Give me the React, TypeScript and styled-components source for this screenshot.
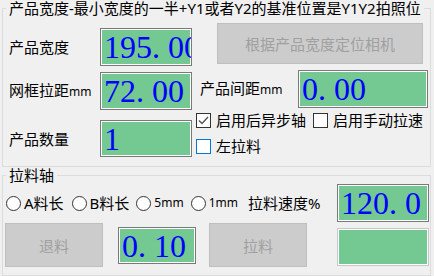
import React from "react";
import styled, { createGlobalStyle } from "styled-components";

const GlobalStyle = createGlobalStyle`
  html, body {
    margin: 0;
    padding: 0;
    background: #f0f0f0;
  }
  body {
    font-family: "Noto Sans", "Noto Sans CJK SC", sans-serif;
    color: #000;
  }
`;

const Form = styled.div`
  width: 434px;
  height: 276px;
  padding-left: 2px;
  box-sizing: border-box;
  overflow: hidden;
`;

const Group = styled.fieldset<{ $h: number }>`
  margin: 0;
  padding: 0;
  min-width: 0;
  width: 429px;
  height: ${(p) => p.$h}px;
  box-sizing: border-box;
  border: 1px solid #dcdcdc;
`;

const GroupTitle = styled.legend`
  margin-left: 3px;
  padding: 0 3px;
  font-size: 15px;
  line-height: 16px;
  height: 16px;
  white-space: nowrap;
`;

const TopBody = styled.div`
  display: grid;
  grid-template-columns: 194px 1fr;
`;

const LeftCol = styled.div`
  display: flex;
  flex-direction: column;
  padding: 12px 0 0 6px;
`;

const FieldRow = styled.div<{ $mt?: number }>`
  display: flex;
  align-items: center;
  margin-top: ${(p) => p.$mt ?? 0}px;
`;

const Label = styled.span<{ $w: number; $pl?: number }>`
  width: ${(p) => p.$w}px;
  padding-left: ${(p) => p.$pl ?? 0}px;
  box-sizing: border-box;
  font-size: 15px;
  line-height: 18px;
  white-space: nowrap;
`;

const Small = styled.span`
  font-size: 12px;
`;

const NumBox = styled.div<{ $w: number; $h?: number; $off?: boolean }>`
  width: ${(p) => p.$w}px;
  height: ${(p) => p.$h ?? 38}px;
  box-sizing: border-box;
  flex-shrink: 0;
  padding: 0 0 0 3px;
  background: #73c991;
  border: 1px solid ${(p) => (p.$off ? "#c8c8c8" : "#7a7a7a")};
  box-shadow: inset 0 0 0 1px #fff;
  color: #0000ff;
  font-family: "Liberation Serif", "Times New Roman", serif;
  font-size: 32px;
  line-height: ${(p) => (p.$h ?? 38) - 1}px;
  white-space: nowrap;
  overflow: hidden;
`;

const Cell = styled.span`
  display: inline-block;
  width: 0.5em;
  text-align: left;
`;

const Num = ({ value }: { value: string }) => (
  <>
    {value.split("").map((c, i) => (
      <Cell key={i}>{c}</Cell>
    ))}
  </>
);

const RightCol = styled.div`
  display: flex;
  flex-direction: column;
  padding-top: 7px;
`;

const GrayButton = styled.div<{ $w: number; $h: number; $ml?: number }>`
  width: ${(p) => p.$w}px;
  height: ${(p) => p.$h}px;
  margin-left: ${(p) => p.$ml ?? 0}px;
  flex-shrink: 0;
  box-sizing: border-box;
  display: flex;
  align-items: center;
  justify-content: center;
  background: #cccccc;
  border: 1px solid #bfbfbf;
  color: #a0a0a0;
  font-size: 15px;
  white-space: nowrap;
`;

const CheckRow = styled.div<{ $mt: number }>`
  display: flex;
  align-items: center;
  gap: 7px;
  margin-top: ${(p) => p.$mt}px;
  margin-left: -1px;
`;

const CheckItem = styled.label`
  display: flex;
  align-items: center;
  gap: 5px;
  font-size: 15px;
  line-height: 16px;
  white-space: nowrap;
`;

const CheckBox = styled.span<{ $focus?: boolean }>`
  width: 15px;
  height: 15px;
  box-sizing: border-box;
  border: 1px solid ${(p) => (p.$focus ? "#0078d7" : "#333")};
  background: #fff;
  display: flex;
  align-items: center;
  justify-content: center;
`;

const Check = ({ checked, focus, children }: { checked?: boolean; focus?: boolean; children: React.ReactNode }) => (
  <CheckItem>
    <CheckBox $focus={focus}>
      {checked && (
        <svg width="13" height="13" viewBox="0 0 13 13">
          <path d="M2 6.5 L5 9.5 L11 3" fill="none" stroke="#555" strokeWidth="1.4" />
        </svg>
      )}
    </CheckBox>
    {children}
  </CheckItem>
);

const BottomBody = styled.div`
  display: flex;
  flex-direction: column;
`;

const AxisRow = styled.div<{ $mt: number; $pl: number; $h: number }>`
  display: flex;
  align-items: center;
  height: ${(p) => p.$h}px;
  margin-top: ${(p) => p.$mt}px;
  padding-left: ${(p) => p.$pl}px;
  padding-right: 1px;
`;

const RadioItem = styled.label<{ $ml?: number }>`
  display: flex;
  align-items: center;
  gap: 3px;
  margin-left: ${(p) => p.$ml ?? 0}px;
  font-size: 15px;
  line-height: 16px;
  white-space: nowrap;
`;

const RadioCircle = styled.span`
  width: 15px;
  height: 15px;
  box-sizing: border-box;
  border: 1px solid #333;
  border-radius: 50%;
  background: #fff;
`;

const Spacer = styled.div`
  flex: 1;
`;

const Push = styled.div<{ $ml?: number; $mt?: number }>`
  margin-left: ${(p) => p.$ml ?? 0}px;
  margin-top: ${(p) => p.$mt ?? 0}px;
  display: flex;
`;

export default function App() {
  return (
    <>
      <GlobalStyle />
      <Form>
        <Group $h={167}>
          <GroupTitle>产品宽度-最小宽度的一半+Y1或者Y2的基准位置是Y1Y2拍照位</GroupTitle>
          <TopBody>
            <LeftCol>
              <FieldRow>
                <Label $w={91}>产品宽度</Label>
                <NumBox $w={92}>
                  <Num value="195.00" />
                </NumBox>
              </FieldRow>
              <FieldRow $mt={6}>
                <Label $w={91}>
                  网框拉距<Small>mm</Small>
                </Label>
                <NumBox $w={92}>
                  <Num value="72.00" />
                </NumBox>
              </FieldRow>
              <FieldRow $mt={10}>
                <Label $w={91}>产品数量</Label>
                <NumBox $w={92} $h={37}>
                  <Num value="1" />
                </NumBox>
              </FieldRow>
            </LeftCol>
            <RightCol>
              <GrayButton $w={206} $h={41} $ml={20}>
                根据产品宽度定位相机
              </GrayButton>
              <FieldRow $mt={6}>
                <Label $w={101} $pl={3}>
                  产品间距<Small>mm</Small>
                </Label>
                <NumBox $w={130}>
                  <Num value="0.00" />
                </NumBox>
              </FieldRow>
              <CheckRow $mt={4}>
                <Check checked>启用后异步轴</Check>
                <Check>启用手动拉速</Check>
              </CheckRow>
              <CheckRow $mt={10}>
                <Check focus>左拉料</Check>
              </CheckRow>
            </RightCol>
          </TopBody>
        </Group>
        <Group $h={109}>
          <GroupTitle>拉料轴</GroupTitle>
          <BottomBody>
            <AxisRow $mt={1} $pl={3} $h={38}>
              <RadioItem>
                <RadioCircle />
                A料长
              </RadioItem>
              <RadioItem $ml={8}>
                <RadioCircle />
                B料长
              </RadioItem>
              <RadioItem $ml={7}>
                <RadioCircle />
                <Small>5mm</Small>
              </RadioItem>
              <RadioItem $ml={7}>
                <RadioCircle />
                <Small>1mm</Small>
              </RadioItem>
              <RadioItem $ml={10}>拉料速度%</RadioItem>
              <Spacer />
              <NumBox $w={92}>
                <Num value="120.0" />
              </NumBox>
            </AxisRow>
            <AxisRow $mt={1} $pl={2} $h={44}>
              <GrayButton $w={98} $h={44}>
                退料
              </GrayButton>
              <Push $ml={15}>
                <NumBox $w={78} $h={37}>
                  <Num value="0.10" />
                </NumBox>
              </Push>
              <GrayButton $w={98} $h={44} $ml={13}>
                拉料
              </GrayButton>
              <Spacer />
              <Push $mt={4}>
                <NumBox $w={92} $off />
              </Push>
            </AxisRow>
          </BottomBody>
        </Group>
      </Form>
    </>
  );
}
